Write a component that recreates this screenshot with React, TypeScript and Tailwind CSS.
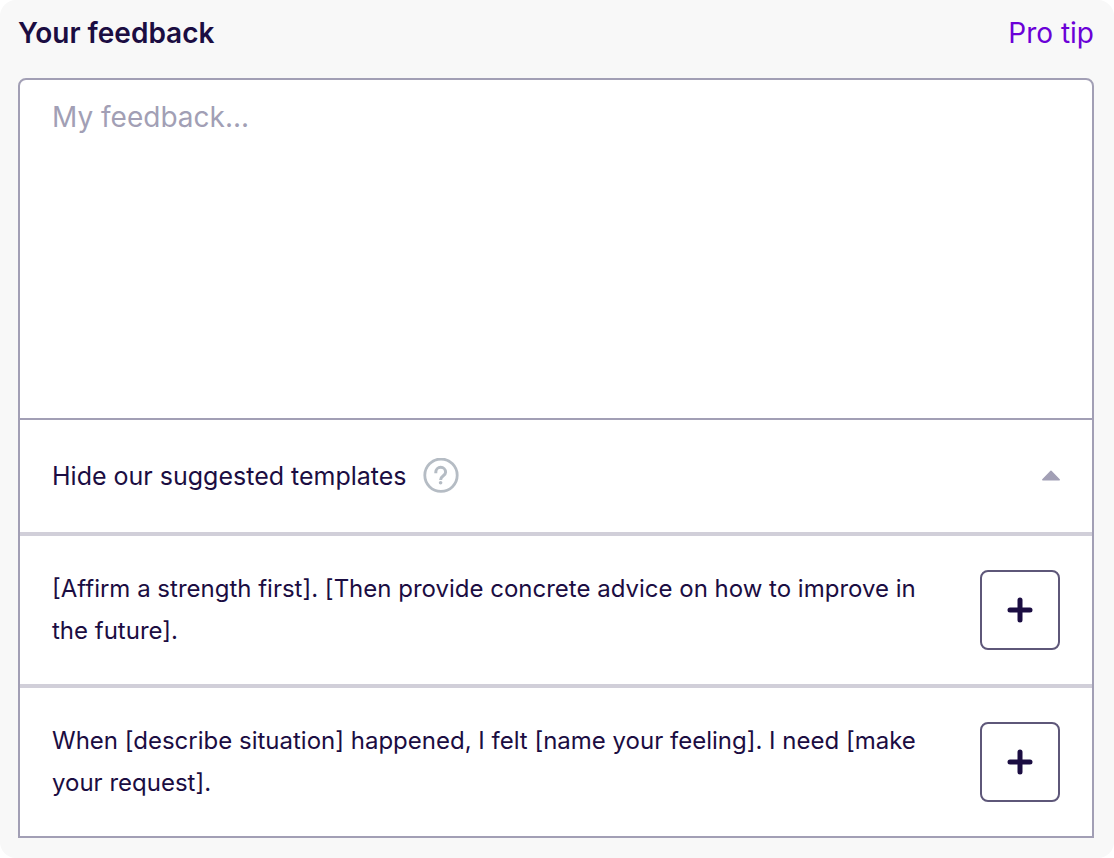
import { useState } from "react";

const templates = [
  "[Affirm a strength first]. [Then provide concrete advice on how to improve in the future].",
  "When [describe situation] happened, I felt [name your feeling]. I need [make your request].",
];

type TemplateRowProps = {
  text: string;
  onAdd: (text: string) => void;
};

function HelpIcon() {
  return (
    <svg className="size-9" viewBox="0 0 36 36" fill="none" aria-hidden="true">
      <circle cx="18" cy="17.2" r="16.2" stroke="#b5bcc4" strokeWidth="2.8" />
      <path
        d="M12.8 15.2V14.2a4.9 4.9 0 0 1 9.8 0c0 3.8-5 3.2-5 7.8"
        stroke="#b5bcc4"
        strokeWidth="3"
      />
      <circle cx="17.6" cy="24.8" r="1.8" fill="#b5bcc4" />
    </svg>
  );
}

function TemplateRow({ text, onAdd }: TemplateRowProps) {
  return (
    <li className="flex items-center justify-between gap-10 border-t-4 border-[#d1cfd9] px-8 py-8">
      <p className="text-2xl leading-[42px]">{text}</p>
      <button
        type="button"
        aria-label="Add template"
        className="flex size-20 shrink-0 items-center justify-center rounded-lg border-2 border-[#5e5779]"
        onClick={() => onAdd(text)}
      >
        <svg className="size-7" viewBox="0 0 28 28" aria-hidden="true">
          <path
            d="M14 4v20M4 14h20"
            stroke="#1b0d42"
            strokeWidth="5"
            strokeLinecap="round"
          />
        </svg>
      </button>
    </li>
  );
}

function App() {
  const [feedback, setFeedback] = useState("");
  const [isOpen, setIsOpen] = useState(true);

  return (
    <main className="rounded-2xl bg-[#f8f8f8] pr-5 pb-5 pl-[18px] font-['Inter','Liberation_Sans',sans-serif] text-[#1b0d42]">
      <div className="flex items-center justify-between pt-3 pb-6 text-[28px] leading-[42px]">
        <label htmlFor="feedback" className="font-semibold">
          Your feedback
        </label>
        <a href="#pro-tip" className="text-[#6b00d7]">
          Pro tip
        </a>
      </div>
      <div className="rounded-t-lg border-2 border-[#a29fb5] bg-white">
        <textarea
          id="feedback"
          className="block h-[340px] w-full resize-none rounded-t-lg border-b-2 border-[#a29fb5] px-8 py-4 text-[28px] leading-[42px] outline-none placeholder:text-[#a29fb5]"
          placeholder="My feedback..."
          value={feedback}
          onChange={(e) => setFeedback(e.target.value)}
        />
        <button
          type="button"
          aria-expanded={isOpen}
          className="flex h-28 w-full items-center justify-between px-8 text-[25px] leading-[42px]"
          onClick={() => setIsOpen(!isOpen)}
        >
          <span className="flex items-center gap-4">
            {isOpen ? "Hide" : "Show"} our suggested templates
            <HelpIcon />
          </span>
          <svg
            className={`h-3 w-5 ${isOpen ? "" : "rotate-180"}`}
            viewBox="0 0 20 12"
            aria-hidden="true"
          >
            <path
              d="M11 1.2 19.2 9.8H2.8Z"
              fill="#a29fb5"
              stroke="#a29fb5"
              strokeWidth="1.5"
              strokeLinejoin="round"
            />
          </svg>
        </button>
        {isOpen && (
          <ul>
            {templates.map((text) => (
              <TemplateRow key={text} text={text} onAdd={setFeedback} />
            ))}
          </ul>
        )}
      </div>
    </main>
  );
}

export default App;
